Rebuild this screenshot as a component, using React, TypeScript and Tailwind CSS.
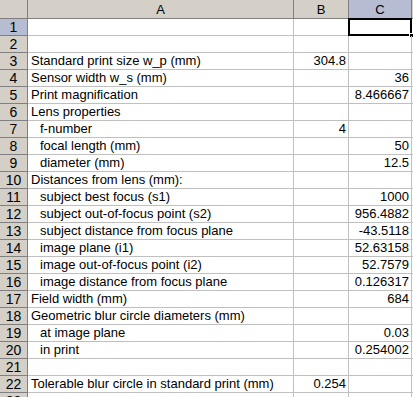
import React from 'react';

type Row = { a?: string; indent?: boolean; b?: string; c?: string };

const rows: Row[] = [
  {},
  {},
  { a: 'Standard print size w_p (mm)', b: '304.8' },
  { a: 'Sensor width w_s (mm)', c: '36' },
  { a: 'Print magnification', c: '8.466667' },
  { a: 'Lens properties' },
  { a: 'f-number', indent: true, b: '4' },
  { a: 'focal length (mm)', indent: true, c: '50' },
  { a: 'diameter (mm)', indent: true, c: '12.5' },
  { a: 'Distances from lens (mm):' },
  { a: 'subject best focus (s1)', indent: true, c: '1000' },
  { a: 'subject out-of-focus point (s2)', indent: true, c: '956.4882' },
  { a: 'subject distance from focus plane', indent: true, c: '-43.5118' },
  { a: 'image plane (i1)', indent: true, c: '52.63158' },
  { a: 'image out-of-focus point (i2)', indent: true, c: '52.7579' },
  { a: 'image distance from focus plane', indent: true, c: '0.126317' },
  { a: 'Field width (mm)', c: '684' },
  { a: 'Geometric blur circle diameters (mm)' },
  { a: 'at image plane', indent: true, c: '0.03' },
  { a: 'in print', indent: true, c: '0.254002' },
  {},
  { a: 'Tolerable blur circle in standard print (mm)', b: '0.254' },
  {},
];

const cols = 'grid grid-cols-[28px_266px_55px_63px_1fr]';

export default function App() {
  return (
    <div
      className="w-[413px] h-[397px] overflow-hidden bg-white text-[13px] text-black"
      style={{ fontFamily: '"Liberation Sans", Arial, sans-serif' }}
    >
      {/* column headers */}
      <div className={`${cols} h-[19px] bg-[#d4d0c8] border-b border-[#808080]`}>
        <div className="border-r border-[#808080]" />
        <div className="border-r border-[#808080] flex items-center justify-center">A</div>
        <div className="border-r border-[#808080] flex items-center justify-center">B</div>
        <div className="border-r border-[#808080] bg-[#b6bdd2] flex items-center justify-center">C</div>
        <div />
      </div>

      {rows.map((r, i) => (
        <div key={i} className={`${cols} h-[17px]`}>
          <div
            className={`border-r border-b border-[#808080] flex items-end justify-center pb-[1px] text-[14px] leading-[14px] ${
              i === 0 ? 'bg-[#b6bdd2]' : 'bg-[#d4d0c8]'
            }`}
          >
            {i + 1}
          </div>
          <div className="border-r border-b border-[#c0c0c0] flex items-end pb-[1px] leading-[14px] whitespace-nowrap overflow-hidden">
            <span className={r.indent ? 'pl-[12px]' : 'pl-[3px]'}>{r.a}</span>
          </div>
          <div className="border-r border-b border-[#c0c0c0] flex items-end justify-end pr-[2px] pb-[1px] leading-[14px]">
            {r.b}
          </div>
          <div className="relative border-r border-b border-[#c0c0c0] flex items-end justify-end pr-[2px] pb-[1px] leading-[14px]">
            {r.c}
            {i === 0 && (
              <>
                <div className="absolute -left-[1px] -top-[1px] -right-[1px] -bottom-[1px] border-2 border-black" />
                <div className="absolute -right-[3px] -bottom-[3px] w-[5px] h-[5px] bg-black border border-white" />
              </>
            )}
          </div>
          <div className="border-b border-[#c0c0c0]" />
        </div>
      ))}
    </div>
  );
}
